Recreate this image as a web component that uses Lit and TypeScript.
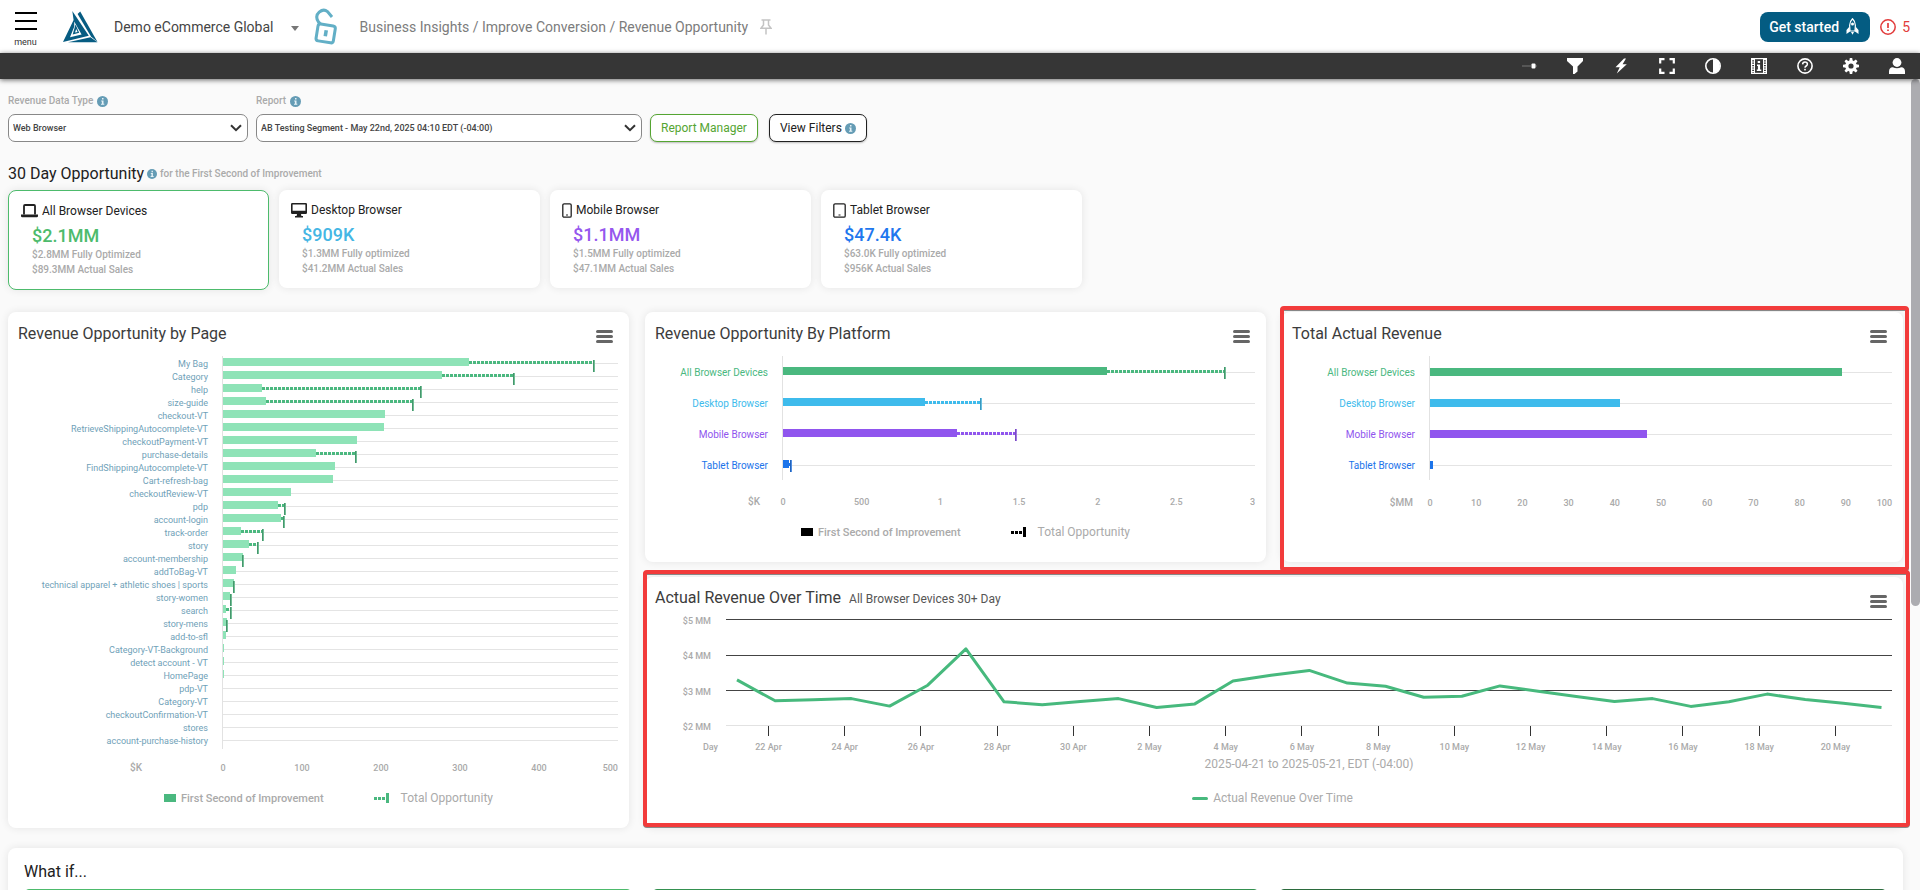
import { LitElement, html, svg, css, nothing } from "lit";
import { customElement, property } from "lit/decorators.js";
import { styleMap } from "lit/directives/style-map.js";
import { classMap } from "lit/directives/class-map.js";

interface Row {
  label: string;
  first: number;
  total?: number;
  tone?: string;
}

const PAGES: Row[] = [
  { label: "My Bag", first: 311, total: 471 },
  { label: "Category", first: 277, total: 370 },
  { label: "help", first: 49, total: 252 },
  { label: "size-guide", first: 54, total: 242 },
  { label: "checkout-VT", first: 205 },
  { label: "RetrieveShippingAutocomplete-VT", first: 204 },
  { label: "checkoutPayment-VT", first: 170 },
  { label: "purchase-details", first: 118, total: 169 },
  { label: "FindShippingAutocomplete-VT", first: 142 },
  { label: "Cart-refresh-bag", first: 139 },
  { label: "checkoutReview-VT", first: 86 },
  { label: "pdp", first: 70, total: 80 },
  { label: "account-login", first: 74, total: 79 },
  { label: "track-order", first: 23, total: 52 },
  { label: "story", first: 33, total: 45 },
  { label: "account-membership", first: 25, total: 27 },
  { label: "addToBag-VT", first: 17 },
  { label: "technical apparel + athletic shoes | sports", first: 14, total: 15 },
  { label: "story-women", first: 9, total: 12 },
  { label: "search", first: 4, total: 11 },
  { label: "story-mens", first: 5, total: 6 },
  { label: "add-to-sfl", first: 4 },
  { label: "Category-VT-Background", first: 1 },
  { label: "detect account - VT", first: 1 },
  { label: "HomePage", first: 1 },
  { label: "pdp-VT", first: 0 },
  { label: "Category-VT", first: 0 },
  { label: "checkoutConfirmation-VT", first: 0 },
  { label: "stores", first: 0 },
  { label: "account-purchase-history", first: 0 },
];

const PLATFORMS: Row[] = [
  { label: "All Browser Devices", first: 2060, total: 2818, tone: "all" },
  { label: "Desktop Browser", first: 905, total: 1265, tone: "desktop" },
  { label: "Mobile Browser", first: 1108, total: 1485, tone: "mobile" },
  { label: "Tablet Browser", first: 40, total: 58, tone: "tablet" },
];

const ACTUALS: Row[] = [
  { label: "All Browser Devices", first: 89.2, tone: "all" },
  { label: "Desktop Browser", first: 41.2, tone: "desktop" },
  { label: "Mobile Browser", first: 47, tone: "mobile" },
  { label: "Tablet Browser", first: 0.7, tone: "tablet" },
];

const SUMMARY = [
  { name: "All Browser Devices", value: "$2.1MM", a: "$2.8MM Fully Optimized", b: "$89.3MM Actual Sales", tone: "all", icon: "laptop" },
  { name: "Desktop Browser", value: "$909K", a: "$1.3MM Fully optimized", b: "$41.2MM Actual Sales", tone: "desktop", icon: "monitor" },
  { name: "Mobile Browser", value: "$1.1MM", a: "$1.5MM Fully optimized", b: "$47.1MM Actual Sales", tone: "mobile", icon: "phone" },
  { name: "Tablet Browser", value: "$47.4K", a: "$63.0K Fully optimized", b: "$956K Actual Sales", tone: "tablet", icon: "tablet" },
];

const DAILY = [
  3.29, 2.7, 2.73, 2.76, 2.55, 3.14, 4.17, 2.67, 2.59, 2.68, 2.76, 2.51, 2.61, 3.26, 3.42, 3.56,
  3.2, 3.11, 2.8, 2.83, 3.12, 2.97, 2.82, 2.68, 2.76, 2.54, 2.67, 2.89, 2.74, 2.63, 2.51,
];

const DAYS = [
  "22 Apr", "24 Apr", "26 Apr", "28 Apr", "30 Apr", "2 May", "4 May", "6 May",
  "8 May", "10 May", "12 May", "14 May", "16 May", "18 May", "20 May",
];

const icons: Record<string, unknown> = {
  laptop: html`<svg width="17" height="14" viewBox="0 0 17 14"><path d="M3 10.500V2q0-1 1-1h9q1 0 1 1v8.500" fill="none" stroke="#212121" stroke-width="1.800"/><path d="M0 10.500h17V12q0 1.200-1.200 1.200H1.200Q0 13.200 0 12z" fill="#212121"/></svg>`,
  monitor: html`<svg width="16" height="15" viewBox="0 0 16 15"><path fill="#212121" fill-rule="evenodd" d="M1.200 0h13.600Q16 0 16 1.200v8.600q0 1.200-1.200 1.200H10l.4 2H12v1.500H4V13h1.600l.4-2H1.200Q0 11 0 9.800V1.200Q0 0 1.200 0zm.4 1.600v6.200h12.800V1.600z"/></svg>`,
  phone: html`<svg width="10" height="15" viewBox="0 0 10 15"><rect x=".8" y=".8" width="8.400" height="13.400" rx="1.300" fill="none" stroke="#212121" stroke-width="1.300"/><path d="M4 12h2" stroke="#212121"/></svg>`,
  tablet: html`<svg width="13" height="15" viewBox="0 0 13 15"><rect x=".8" y=".8" width="11.400" height="13.400" rx="1.300" fill="none" stroke="#212121" stroke-width="1.300"/><path d="M5.500 12h2" stroke="#212121"/></svg>`,
  info: html`<svg class="info" width="11" height="11" viewBox="0 0 11 11"><circle cx="5.500" cy="5.500" r="5.500" fill="#659cb5"/><path d="M5 2h1.500v1.500H5zM4.200 4.500h2.300v3.300h.8v1H4v-1h.9V5.400h-.7z" fill="#e6f2f7"/></svg>`,
  slider: svg`<path d="M1 8h9M14 8h2" stroke="#777"/><rect x="10.500" y="5.500" width="4" height="5" rx="1" fill="#fff"/>`,
  funnel: svg`<path d="M0 0h16v3l-5.500 5.500V13.500L7.500 16H6V8.500L0 3z" fill="#fff"/>`,
  bolt: svg`<path d="M11 .5 2.500 9.200h4.200L3.800 15.500l10-9.300H9.600L13 .5z" fill="#fff"/>`,
  brackets: svg`<path d="M1.200 5.500V1.200h4.300M10.500 1.200h4.300v4.300M14.800 10.500v4.300h-4.300M5.500 14.800H1.200v-4.300" fill="none" stroke="#fff" stroke-width="2.200"/>`,
  contrast: svg`<circle cx="8" cy="8" r="7.200" fill="none" stroke="#fff" stroke-width="1.600"/><path d="M8 1a7 7 0 0 1 0 14z" fill="#fff"/>`,
  film: svg`<rect x=".6" y=".6" width="14.800" height="14.800" fill="none" stroke="#fff" stroke-width="1.200"/><path d="M3.500 1v14M12.500 1v14" stroke="#fff" stroke-width="1"/><path d="M2 1v14M14 1v14" stroke="#fff" stroke-width="2" stroke-dasharray="1.200 1.200"/><path d="M6.700 3h2.400v2H6.700zM6 6.500h3.100v5h1.200V13H5.800v-1.500h1.100V8H6z" fill="#fff"/>`,
  help: svg`<circle cx="8" cy="8" r="7.100" fill="none" stroke="#fff" stroke-width="1.600"/><path d="M5.600 6.400Q5.700 4.100 8 4.100t2.400 2q0 1.200-1.200 1.900T8 9.800" fill="none" stroke="#fff" stroke-width="1.500"/><rect x="7.200" y="10.800" width="1.600" height="1.600" fill="#fff"/>`,
  gear: svg`<g fill="#fff"><path fill-rule="evenodd" d="M8 2.200a5.800 5.800 0 1 0 0 11.600A5.800 5.800 0 0 0 8 2.200zm0 3.200a2.600 2.600 0 1 1 0 5.200 2.600 2.600 0 0 1 0-5.200z"/>${[0, 45, 90, 135, 180, 225, 270, 315].map(
    (a) => svg`<path d="M6.300 3.200 6.800 0h2.400l.5 3.200z" transform=${`rotate(${a} 8 8)`}/>`
  )}</g>`,
  person: svg`<circle cx="8" cy="4.500" r="4.400" fill="#fff"/><path d="M0 16v-2.500Q0 9.500 3.800 9.300q4.200 1.800 8.400 0Q16 9.500 16 13.500V16z" fill="#fff"/>`,
};

const TOOLS: [string, string][] = [
  ["slider", "Range"],
  ["funnel", "Filter"],
  ["bolt", "Quick actions"],
  ["brackets", "Full screen"],
  ["contrast", "Contrast"],
  ["film", "Video guide"],
  ["help", "Help"],
  ["gear", "Settings"],
  ["person", "Account"],
];

const base = css`
  *, *::before, *::after { box-sizing: border-box; }
  button {
    font: inherit;
    color: inherit;
    background: none;
    border: 0;
    margin: 0;
    padding: 0;
    cursor: pointer;
  }
  a { color: inherit; text-decoration: none; }
  svg { display: block; flex: none; }
`;

const cardStyles = css`
  :host {
    display: block;
    position: relative;
    background: #fff;
    border-radius: 8px;
    box-shadow: 0 0 8px rgba(0, 0, 0, 0.09);
  }
  :host([marked])::after {
    content: "";
    position: absolute;
    inset: -6px -6px -9px -2px;
    border: 4px solid #f23b3b;
    border-radius: 4px;
    filter: drop-shadow(0 1px 0 rgba(90, 90, 90, 0.7));
    pointer-events: none;
    z-index: 1;
  }
  .head {
    display: flex;
    justify-content: space-between;
    align-items: flex-start;
    height: 44px;
    padding: 10px 16px 0 10px;
  }
  h2 {
    margin: 0;
    font-size: 16px;
    line-height: 24px;
    font-weight: 400;
    color: #3c3c3c;
    white-space: nowrap;
  }
  .burger {
    display: grid;
    gap: 2px;
    width: 17px;
    margin-top: 8px;
  }
  .burger i {
    height: 3px;
    border-radius: 2px;
    background: #666;
  }
  .legend {
    display: flex;
    justify-content: center;
    align-items: center;
    gap: 5px;
    height: 16px;
    margin-top: 14px;
    color: #aaa;
    font-size: 12px;
    white-space: nowrap;
  }
`;

const burger = html`<button class="burger" aria-label="Chart menu"><i></i><i></i><i></i></button>`;

@customElement("bar-chart")
class BarChart extends LitElement {
  @property() heading = "";
  @property() unit = "";
  @property() kind = "";
  @property({ type: Number }) max = 100;
  @property({ attribute: false }) rows: Row[] = [];
  @property({ attribute: false }) ticks: string[] = [];
  @property({ type: Boolean }) legend = false;

  static styles = [
    base,
    cardStyles,
    css`
      .pages { --col: 214px; --row: 13px; --line: 7px; --rise: 3px; --bar: 5px; --unit: 80px; }
      .platform { --col: 137px; --row: 31px; --line: 16px; --rise: 5px; --bar: 5px; --unit: 22px; }
      .actual { --col: 147px; --row: 31px; --line: 16px; --rise: 5px; --bar: 4px; --unit: 16px; }
      .row {
        display: grid;
        grid-template-columns: var(--col) 1fr;
        height: var(--row);
        margin-right: 11px;
        line-height: 16px;
        font-size: 10px;
        color: #4ab87f;
      }
      .label {
        justify-self: end;
        margin: calc(var(--line) - 7px) 14px 0 0;
        white-space: nowrap;
      }
      .pages .row { font-size: 9px; color: #4bb87f; }
      .pages .label { color: #6fa1b8; }
      .row.desktop { color: #3ebbec; }
      .row.mobile { color: #9055ee; }
      .row.tablet { color: #1c74ea; }
      .track {
        display: grid;
        align-items: start;
        border-left: 1px solid #e2e2e2;
        background: linear-gradient(#e4e4e4, #e4e4e4) 0 var(--line) / 100% 1px no-repeat;
      }
      .track > * { grid-area: 1 / 1; }
      .bar {
        height: 8px;
        margin-top: calc(var(--line) - var(--bar));
        background: currentColor;
      }
      .pages .bar { background: #8ee3b7; }
      .dash {
        height: 3px;
        margin-top: calc(var(--line) - 2px);
        background: repeating-linear-gradient(90deg, currentColor 0 3px, transparent 3px 4px);
      }
      .end {
        width: 2px;
        height: 12px;
        margin-top: calc(var(--line) - var(--rise));
        background: linear-gradient(90deg, color-mix(in srgb, currentColor 75%, #333) 50%, color-mix(in srgb, currentColor 70%, #ccc) 50%);
      }
      .axis {
        display: grid;
        grid-template-columns: var(--col) 1fr;
        margin: 14px 11px 0 0;
        height: 16px;
        line-height: 16px;
        font-size: 9px;
        font-weight: 500;
        color: #aaa;
      }
      .actual .axis { margin-top: 15px; }
      .unit { justify-self: end; margin-right: var(--unit); font-size: 10px; }
      .ticks { display: flex; padding-left: 1px; }
      .cell { flex: 1 1 0; }
      .tick {
        display: flex;
        justify-content: center;
        width: 0;
        white-space: nowrap;
      }
      .last { flex: none; justify-content: flex-end; }
      .legend { padding-left: 20px; }
      .bold { font-size: 11px; font-weight: 500; }
      .swatch { width: 12px; height: 8px; background: #4ab87f; }
      .span {
        display: flex;
        align-items: center;
        margin: 0 7px 0 45px;
        color: #4ab87f;
      }
      .span::before {
        content: "";
        width: 12px;
        height: 3px;
        background: repeating-linear-gradient(90deg, currentColor 0 3px, transparent 3px 4px);
      }
      .span::after { content: ""; width: 3px; height: 10px; background: currentColor; }
      .platform .swatch { background: #000; }
      .platform .span { color: #000; }
    `,
  ];

  pct(v: number) {
    return `${(v / this.max) * 100}%`;
  }

  render() {
    return html`
      <section class=${this.kind}>
        <div class="head"><h2>${this.heading}</h2>${burger}</div>
        ${this.rows.map(
          (r) => html`<div class=${classMap({ row: true, [r.tone ?? "page"]: true })}>
            ${this.kind === "pages"
              ? html`<a class="label" href="#">${r.label}</a>`
              : html`<span class="label">${r.label}</span>`}
            <div class="track">
              <div class="bar" style=${styleMap({ width: this.pct(r.first) })}></div>
              ${r.total
                ? html`<div class="dash" style=${styleMap({ marginLeft: this.pct(r.first), width: `calc(${this.pct(r.total - r.first)} - 2px)` })}></div>
                    <div class="end" style=${styleMap({ marginLeft: `calc(${this.pct(r.total)} - 2px)` })}></div>`
                : nothing}
            </div>
          </div>`
        )}
        <div class="axis">
          <span class="unit">${this.unit}</span>
          <div class="ticks">
            ${this.ticks.map((t, i) =>
              i < this.ticks.length - 1
                ? html`<div class="cell"><span class="tick">${t}</span></div>`
                : html`<span class="tick last">${t}</span>`
            )}
          </div>
        </div>
        ${this.legend
          ? html`<div class="legend">
              <i class="swatch"></i><span class="bold">First Second of Improvement</span>
              <i class="span"></i><span>Total Opportunity</span>
            </div>`
          : nothing}
      </section>
    `;
  }
}

@customElement("trend-chart")
class TrendChart extends LitElement {
  static styles = [
    base,
    cardStyles,
    css`
      :host { padding-bottom: 22px; }
      :host([marked])::after { inset: -7px -7px 1px -2px; }
      .head { height: 42px; padding-top: 9px; }
      .burger { margin-top: 9px; }
      .sub { font-size: 12px; color: #555; margin-left: 4px; }
      .plot {
        display: grid;
        grid-template-columns: 81px 1fr;
        margin-right: 11px;
        font-size: 9px;
        font-weight: 500;
        line-height: 12px;
        color: #aaa;
      }
      .levels {
        display: flex;
        flex-direction: column;
        justify-content: space-between;
        align-items: flex-end;
        margin: -4px 15px -7px 0;
      }
      .lines { width: 100%; height: 107px; overflow: visible; }
      .lines path { fill: none; stroke: #444; vector-effect: non-scaling-stroke; shape-rendering: crispEdges; }
      .lines .floor { stroke: #e2e2e2; }
      .lines .trend { stroke: #47b97d; stroke-width: 3px; shape-rendering: auto; stroke-linejoin: round; }
      .unit { justify-self: end; align-self: end; margin-right: 8px; }
      .days { display: flex; padding: 0 4.85% 0 3.65%; }
      .cell { flex: 1 1 0; }
      .cell:last-child { flex: none; }
      .day {
        display: flex;
        flex-direction: column;
        align-items: center;
        gap: 5px;
        width: 0;
        white-space: nowrap;
      }
      .day::before { content: ""; width: 1px; height: 10px; background: #333; }
      .range {
        grid-column: 2;
        margin: 3px 0 0;
        font-size: 12px;
        font-weight: 400;
        line-height: 16px;
        text-align: center;
      }
      .legend { margin-top: 18px; padding-right: 3px; }
      .key { width: 16px; height: 3px; border-radius: 2px; background: #47b97d; }
    `,
  ];

  render() {
    const y = (v: number) => 0.5 + ((5 - v) / 3) * 106;
    const points = DAILY.map((v, i) => `${11 + i * 38.15} ${y(v).toFixed(1)}`).join("L");
    return html`
      <section>
        <div class="head">
          <h2>Actual Revenue Over Time <span class="sub">All Browser Devices 30+ Day</span></h2>
          ${burger}
        </div>
        <div class="plot">
          <div class="levels">${[5, 4, 3, 2].map((n) => html`<span>$${n} MM</span>`)}</div>
          <svg class="lines" viewBox="0 0 1166 107" preserveAspectRatio="none" role="img" aria-label="Actual revenue per day">
            <path d="M0 .5H1166M0 36.500H1166M0 71.500H1166" />
            <path class="floor" d="M0 106.500H1166" />
            <path class="trend" d=${"M" + points} />
          </svg>
          <span class="unit">Day</span>
          <div class="days">
            ${DAYS.map((d) => html`<div class="cell"><span class="day">${d}</span></div>`)}
          </div>
          <p class="range">2025-04-21 to 2025-05-21, EDT (-04:00)</p>
        </div>
        <div class="legend"><i class="key"></i><span>Actual Revenue Over Time</span></div>
      </section>
    `;
  }
}

@customElement("app-root")
class AppRoot extends LitElement {
  static styles = [
    base,
    css`
      :host {
        display: flex;
        flex-direction: column;
        height: 100vh;
        overflow: hidden;
        background: #fafafa;
        font-family: Roboto, "Liberation Sans", sans-serif;
        color: #212121;
      }
      .top {
        display: flex;
        align-items: center;
        height: 53px;
        padding: 0 10px 0 14px;
        background: #fff;
        font-size: 14px;
        line-height: 20px;
        white-space: nowrap;
      }
      .menu {
        display: grid;
        justify-items: center;
        gap: 6px;
        padding-top: 6px;
        font-size: 9px;
        line-height: 12px;
        color: #333;
      }
      .logo { margin-left: 26px; }
      .account {
        display: flex;
        align-items: center;
        gap: 17px;
        margin: 0 15px 0 16px;
        color: #444;
      }
      .caret { margin-top: 3px; }
      .crumbs { margin: 0 12px 0 22px; color: #7c7c7c; }
      .start {
        display: flex;
        align-items: center;
        gap: 7px;
        height: 30px;
        margin-left: auto;
        padding: 0 11px 0 9px;
        border-radius: 8px;
        background: #045c82;
        color: #fff;
        font-weight: 500;
      }
      .alerts {
        display: flex;
        align-items: center;
        gap: 6px;
        margin-left: 10px;
        color: #e23b3b;
      }
      .tools {
        display: flex;
        justify-content: flex-end;
        align-items: center;
        gap: 30px;
        height: 26px;
        padding: 0 15px;
        background: #363636;
        box-shadow: 0 1px 5px rgba(0, 0, 0, 0.6);
        position: relative;
      }
      .body {
        display: grid;
        grid-template-columns: minmax(0, 1fr) 9px;
        flex: 1;
        min-height: 0;
      }
      .rail i {
        display: block;
        height: 65%;
        border-radius: 5px;
        background: #acacb0;
      }
      main { padding: 15px 8px 0; overflow: hidden; }
      .filters { display: flex; align-items: flex-end; gap: 8px; }
      .field { display: grid; gap: 6px; }
      .name {
        display: flex;
        align-items: center;
        gap: 4px;
        font-size: 10px;
        font-weight: 500;
        line-height: 14px;
        color: #aaa;
      }
      .pick { display: grid; align-items: center; }
      .pick > * { grid-area: 1 / 1; }
      .pick svg { justify-self: end; margin-right: 6px; pointer-events: none; }
      select {
        appearance: none;
        height: 28px;
        padding: 0 24px 0 4px;
        border: 1px solid #888;
        border-radius: 7px;
        background: #fff;
        font: 500 9px Roboto, sans-serif;
        color: #444;
      }
      .type { width: 240px; }
      .report { width: 386px; }
      .pill {
        display: flex;
        align-items: center;
        gap: 3px;
        height: 28px;
        padding: 0 10px;
        border: 1px solid #212121;
        border-radius: 7px;
        background: #fff;
        font-size: 12px;
        box-shadow: 0 1px 2px rgba(0, 0, 0, 0.25);
        white-space: nowrap;
      }
      .pill.green { border-color: #55a532; color: #55a532; margin-right: 3px; }
      .title {
        display: flex;
        align-items: center;
        gap: 3px;
        margin: 22px 0 6px;
        line-height: 20px;
      }
      h1 { margin: 0; font-size: 16px; font-weight: 400; }
      .title .info { width: 10px; height: 10px; }
      .note { font-size: 10px; font-weight: 500; color: #aaa; }
      .cards {
        display: grid;
        grid-template-columns: repeat(4, 261px);
        align-items: start;
        gap: 10px;
      }
      .stat {
        display: block;
        padding: 12px;
        border-radius: 8px;
        background: #fff;
        box-shadow: 0 0 8px rgba(0, 0, 0, 0.09);
        text-align: left;
      }
      .stat.on { border: 1px solid #4dbb6c; }
      .who {
        display: flex;
        align-items: center;
        gap: 4px;
        font-size: 12px;
        line-height: 16px;
        height: 16px;
      }
      .money {
        display: block;
        margin: 5px 0 0 11px;
        font-size: 18px;
        font-weight: 500;
        line-height: 23px;
      }
      .line {
        display: block;
        margin-left: 11px;
        font-size: 10px;
        font-weight: 500;
        line-height: 15px;
        color: #aaa;
      }
      .all { color: #4dbb6c; }
      .desktop { color: #45b6e4; }
      .mobile { color: #9557ee; }
      .tablet { color: #1f77ee; }
      .charts {
        display: grid;
        grid-template-columns: repeat(3, minmax(0, 1fr));
        gap: 15px 16px;
        margin-top: 22px;
      }
      .by-page { grid-row: span 2; padding-bottom: 22px; }
      .by-platform { padding-bottom: 22px; }
      .over-time { grid-column: span 2; }
      .whatif {
        margin-top: 20px;
        padding: 12px 16px;
        border-radius: 8px;
        background: #fff;
        box-shadow: 0 0 8px rgba(0, 0, 0, 0.09);
      }
      .whatif h2 {
        margin: 0 0 5px;
        font-size: 16px;
        font-weight: 400;
        line-height: 24px;
      }
      .panels { display: grid; grid-template-columns: repeat(3, 1fr); gap: 20px; }
      .panel { height: 90px; border-radius: 5px; border: 1px solid #4dbb6c; }
      .panel.mid { border-color: #349150; }
      .panel.dark { border-color: #2b6b3d; }
    `,
  ];

  select(id: string, label: string, value: string) {
    return html`<div class="field">
      <label class="name" for=${id}>${label} ${icons.info}</label>
      <div class="pick">
        <select id=${id} class=${id}><option>${value}</option></select>
        <svg width="12" height="8" viewBox="0 0 12 8"><path d="m1 1.200 5 5 5-5" fill="none" stroke="#333" stroke-width="2"/></svg>
      </div>
    </div>`;
  }

  render() {
    return html`
      <header class="top">
        <button class="menu">
          <svg width="23" height="18" viewBox="0 0 23 18"><path d="M1 1h22M1 9h22M1 17h22" stroke="#000" stroke-width="2"/></svg>
          menu
        </button>
        <svg class="logo" width="35" height="32" viewBox="0 0 35 32">
          <g fill="#065c82">
            <path d="M17.200.5 34.500 31 28 25.500 14.600 3z"/>
            <path d="M9.300 0 13 5.500 25.800 24.800 0 31l10.600-22z"/>
            <path d="M5 31.300 27.500 26.200l7 5.100z"/>
          </g>
          <path d="M11.200 10.500 18.600 23.500 7 26.200l4.300-10.800z" fill="#fff"/>
          <path d="M12.500 13.500 16.200 21.800 9.700 23.400z" fill="#065c82"/>
          <path d="M13.200 18 14.600 21 12 21.600z" fill="#fff"/>
        </svg>
        <button class="account">
          Demo eCommerce Global
          <svg class="caret" width="8" height="5" viewBox="0 0 8 5"><path d="M0 0h8L4 5z" fill="#777"/></svg>
        </button>
        <svg width="24" height="38" viewBox="0 0 24 38">
          <g fill="none" stroke="#62afc6" stroke-width="3">
            <rect x="3" y="17" width="17.500" height="17" rx="2.500" transform="rotate(9 12 25)"/>
            <path d="M6.800 16.500 4.200 13.500Q.8 8 5.200 4.200T13.500 3.600L18 9"/>
          </g>
          <path d="m10.500 22 3.500.6-1 6-3.500-.6z" fill="#62afc6"/>
        </svg>
        <nav class="crumbs">Business Insights / Improve Conversion / Revenue Opportunity</nav>
        <button aria-label="Pin page">
          <svg width="12" height="16" viewBox="0 0 12 16"><path d="M1.500 1h9M3.500 1v5L1 9.200h10L8.500 6V1M6 9v6.500" fill="none" stroke="#c4c4c4" stroke-width="1.500"/></svg>
        </button>
        <button class="start">
          Get started
          <svg width="13" height="17" viewBox="0 0 13 17">
            <path d="M6.500.8Q3.200 4 3.700 8.500L4 13h5l.3-4.500Q9.800 4 6.500.8z" fill="none" stroke="#fff" stroke-width="1.200"/>
            <circle cx="6.500" cy="6" r="1.500" fill="#fff"/>
            <path d="M3.500 8.500.5 12v4L4 13.500zM9.500 8.500l3 3.500v4L9 13.500zM5 14h3l-1.500 2.800z" fill="#fff"/>
          </svg>
        </button>
        <button class="alerts" aria-label="5 alerts">
          <svg width="16" height="16" viewBox="0 0 16 16"><circle cx="8" cy="8" r="7.200" fill="none" stroke="#e23b3b" stroke-width="1.500"/><path d="M8 4v5M8 10.500V12" stroke="#e23b3b" stroke-width="1.700"/></svg>
          5
        </button>
      </header>
      <nav class="tools">
        ${TOOLS.map(
          ([icon, label]) =>
            html`<button aria-label=${label}><svg width="16" height="16" viewBox="0 0 16 16">${icons[icon]}</svg></button>`
        )}
      </nav>
      <div class="body">
        <main>
          <div class="filters">
            ${this.select("type", "Revenue Data Type", "Web Browser")}
            ${this.select("report", "Report", "AB Testing Segment - May 22nd, 2025 04:10 EDT (-04:00)")}
            <button class="pill green">Report Manager</button>
            <button class="pill">View Filters ${icons.info}</button>
          </div>
          <div class="title">
            <h1>30 Day Opportunity</h1>
            ${icons.info}
            <span class="note">for the First Second of Improvement</span>
          </div>
          <div class="cards">
            ${SUMMARY.map(
              (s, i) => html`<button class=${classMap({ stat: true, on: i === 0 })} aria-pressed=${i === 0}>
                <span class="who">${icons[s.icon]} ${s.name}</span>
                <span class="money ${s.tone}">${s.value}</span>
                <span class="line">${s.a}</span>
                <span class="line">${s.b}</span>
              </button>`
            )}
          </div>
          <div class="charts">
            <bar-chart class="by-page" kind="pages" heading="Revenue Opportunity by Page" unit="$K" max="500" legend
              .rows=${PAGES} .ticks=${["0", "100", "200", "300", "400", "500"]}></bar-chart>
            <bar-chart class="by-platform" kind="platform" heading="Revenue Opportunity By Platform" unit="$K" max="3000" legend
              .rows=${PLATFORMS} .ticks=${["0", "500", "1", "1.5", "2", "2.5", "3"]}></bar-chart>
            <bar-chart marked kind="actual" heading="Total Actual Revenue" unit="$MM" max="100"
              .rows=${ACTUALS} .ticks=${["0", "10", "20", "30", "40", "50", "60", "70", "80", "90", "100"]}></bar-chart>
            <trend-chart class="over-time" marked></trend-chart>
          </div>
          <section class="whatif">
            <h2>What if...</h2>
            <div class="panels">
              <div class="panel"></div>
              <div class="panel mid"></div>
              <div class="panel dark"></div>
            </div>
          </section>
        </main>
        <div class="rail"><i></i></div>
      </div>
    `;
  }
}
